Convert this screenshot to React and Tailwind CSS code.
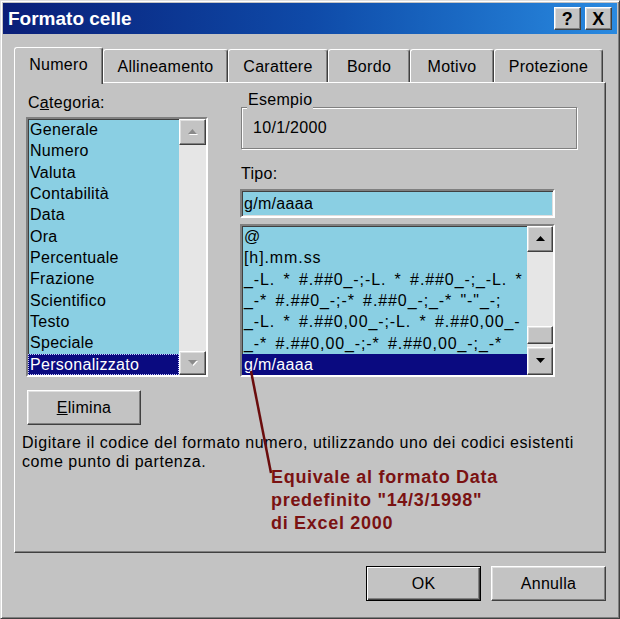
import React from "react";

const raised =
  "bg-[#c3c3c3] border border-t-white border-l-white border-r-[#404040] border-b-[#404040] shadow-[inset_-1px_-1px_0_#808080,inset_1px_1px_0_#dfdfdf]";
const sunken =
  "border-2 border-t-[#808080] border-l-[#808080] border-r-white border-b-white shadow-[inset_1px_1px_0_#404040,inset_-1px_-1px_0_#dfdfdf]";

const Arrow = ({ up, disabled }) => (
  <svg width="11" height="7" viewBox="0 0 11 7">
    {disabled && (
      <polygon
        points={up ? "6.5,1 11,6 2,6" : "2,1 11,1 6.5,6"}
        fill="#ffffff"
      />
    )}
    <polygon
      points={up ? "5.5,0 10,5 1,5" : "1,0 10,0 5.5,5"}
      fill={disabled ? "#8a8a8a" : "#000000"}
    />
  </svg>
);

const ScrollBtn = ({ up, disabled, h }) => (
  <div className={`${raised} ${h} w-full flex items-center justify-center`}>
    <Arrow up={up} disabled={disabled} />
  </div>
);

const categories = [
  "Generale",
  "Numero",
  "Valuta",
  "Contabilità",
  "Data",
  "Ora",
  "Percentuale",
  "Frazione",
  "Scientifico",
  "Testo",
  "Speciale",
  "Personalizzato",
];

// only the part that the list shows before the scroll bar
const formats = [
  "@",
  "[h].mm.ss",
  "_-L. * #.##0_-;-L. * #.##0_-;_-L. *",
  '_-* #.##0_-;-* #.##0_-;_-* "-"_-;',
  "_-L. * #.##0,00_-;-L. * #.##0,00_-",
  "_-* #.##0,00_-;-* #.##0,00_-;_-*",
  "g/m/aaaa",
];

const tabs = [
  { label: "Numero", w: "w-[89px]", active: true },
  { label: "Allineamento", w: "w-[125px]" },
  { label: "Carattere", w: "w-[100px]" },
  { label: "Bordo", w: "w-[82px]" },
  { label: "Motivo", w: "w-[84px]" },
  { label: "Protezione", w: "w-[109px]" },
];

const App = () => {
  return (
    <div className="relative w-[620px] h-[619px] overflow-hidden bg-[#c3c3c3] border border-t-[#dfdfdf] border-l-[#dfdfdf] border-r-[#404040] border-b-[#404040] shadow-[inset_1px_1px_0_#fff,inset_-1px_-1px_0_#808080] p-[2px] font-['Liberation_Sans',Arial,sans-serif] text-[16px] tracking-[0.3px] text-black">
      {/* title bar */}
      <div className="h-[31px] flex items-center justify-between pl-[5px] pr-[5px] bg-gradient-to-r from-[#0a1e78] via-[#0f4aa8] to-[#2a8ae0]">
        <span className="text-white font-bold text-[19px] leading-none tracking-normal">
          Formato celle
        </span>
        <div className="flex gap-[4px]">
          <div className={`${raised} w-[27px] h-[23px] flex items-center justify-center font-bold text-[18px] leading-none`}>
            ?
          </div>
          <div className={`${raised} w-[27px] h-[23px] flex items-center justify-center font-bold text-[18px] leading-none`}>
            X
          </div>
        </div>
      </div>

      <div className="pl-[11px]">
        {/* tabs */}
        <div className="mt-[13px] h-[35px] flex items-end">
          {tabs.map((t) =>
            t.active ? (
              <div
                key={t.label}
                className={`${t.w} h-[37px] -mb-[2px] relative z-10 bg-[#c3c3c3] border-t border-l border-r border-t-white border-l-white border-r-[#404040] rounded-t-[3px] shadow-[inset_-1px_0_0_#808080] flex items-center justify-center pb-[3px]`}
              >
                {t.label}
              </div>
            ) : (
              <div
                key={t.label}
                className={`${t.w} h-[33px] bg-[#c3c3c3] border-t border-l border-r border-t-white border-l-white border-r-[#404040] rounded-t-[3px] shadow-[inset_-1px_0_0_#808080] flex items-center justify-center pt-[2px]`}
              >
                {t.label}
              </div>
            )
          )}
        </div>

        {/* panel */}
        <div className="w-[592px] h-[471px] border border-t-white border-l-white border-r-[#404040] border-b-[#404040] shadow-[inset_-1px_-1px_0_#808080] flex flex-col">
          <div className="mt-[11px] pl-[11px] flex gap-[32px]">
            {/* categoria */}
            <div className="w-[182px] flex flex-col">
              <div className="h-[18px] leading-[18px] pl-[2px]">
                C<u>a</u>tegoria:
              </div>
              <div className={`${sunken} mt-[5px] h-[260px] flex bg-[#8acfe3]`}>
                <div className="flex-1 flex flex-col">
                  {categories.map((c) =>
                    c === "Personalizzato" ? (
                      <div
                        key={c}
                        className="h-[21.33px] leading-[19px] pl-[1px] bg-[#0a0a80] text-white border border-dotted border-[#c8c8ff]"
                      >
                        {c}
                      </div>
                    ) : (
                      <div key={c} className="h-[21.33px] leading-[21.33px] pl-[2px]">
                        {c}
                      </div>
                    )
                  )}
                </div>
                <div className="w-[27px] flex flex-col">
                  <ScrollBtn up disabled h="h-[26px]" />
                  <div className="flex-1 bg-[#e6e6e6]" />
                  <ScrollBtn disabled h="h-[24px]" />
                </div>
              </div>
            </div>

            {/* right column */}
            <div className="w-[337px] flex flex-col mt-[13px]">
              <div className="ml-[1px] w-[336px] h-[42px] border border-[#808080] shadow-[1px_1px_0_#fff,inset_1px_1px_0_#fff]">
                <div className="-mt-[17px] ml-[5px] w-fit px-[1px] bg-[#c3c3c3] leading-[18px]">
                  Esempio
                </div>
                <div className="mt-[10px] ml-[11px] leading-[18px]">10/1/2000</div>
              </div>

              <div className="mt-[16px] pl-[1px] leading-[18px]">Tipo:</div>
              <div className={`${sunken} mt-[6px] w-[315px] h-[29px] bg-[#8acfe3] flex items-center pl-[2px]`}>
                g/m/aaaa
              </div>

              <div className={`${sunken} mt-[6px] w-[315px] h-[153px] bg-[#8acfe3] flex`}>
                <div className="flex-1 flex flex-col overflow-hidden">
                  {formats.map((f, i) =>
                    i === formats.length - 1 ? (
                      <div
                        key={i}
                        className="h-[21.33px] leading-[21.33px] pl-[2px] bg-[#0a0a80] text-white whitespace-nowrap"
                      >
                        {f}
                      </div>
                    ) : (
                      <div
                        key={i}
                        className="h-[21.33px] leading-[21.33px] pl-[2px] whitespace-nowrap tracking-[0.9px] [word-spacing:3px]"
                      >
                        {f}
                      </div>
                    )
                  )}
                </div>
                <div className="w-[26px] flex flex-col">
                  <ScrollBtn up h="h-[26px]" />
                  <div className="h-[74px] bg-[#e6e6e6]" />
                  <div className={`${raised} h-[18px]`} />
                  <div className="flex-1 bg-[#e6e6e6]" />
                  <ScrollBtn h="h-[28px]" />
                </div>
              </div>
            </div>
          </div>

          <button className={`${raised} mt-[13px] ml-[12px] w-[114px] h-[35px] flex items-center justify-center`}>
            <span>
              <u>E</u>limina
            </span>
          </button>

          <p className="mt-[8px] ml-[7px] leading-[19px] tracking-[0.55px]">
            Digitare il codice del formato numero, utilizzando uno dei codici esistenti
            <br />
            come punto di partenza.
          </p>
        </div>

        {/* buttons */}
        <div className="mt-[13px] w-[592px] flex justify-end gap-[10px]">
          <button className="w-[115px] h-[35px] bg-[#c3c3c3] border border-black shadow-[inset_1px_1px_0_#fff,inset_-1px_-1px_0_#404040,inset_-2px_-2px_0_#808080] flex items-center justify-center">
            OK
          </button>
          <button className={`${raised} w-[115px] h-[35px] flex items-center justify-center`}>
            Annulla
          </button>
        </div>
      </div>

      {/* annotation */}
      <svg className="absolute left-0 top-0 pointer-events-none" width="620" height="619">
        <line x1="250" y1="370" x2="270" y2="472" stroke="#6a0c0c" strokeWidth="2.5" />
      </svg>
      <div className="absolute left-[270px] top-[465px] text-[#7a1212] font-bold text-[18px] leading-[23px] tracking-[0.7px]">
        Equivale al formato Data
        <br />
        predefinito "14/3/1998"
        <br />
        di Excel 2000
      </div>
    </div>
  );
};

export default App;
